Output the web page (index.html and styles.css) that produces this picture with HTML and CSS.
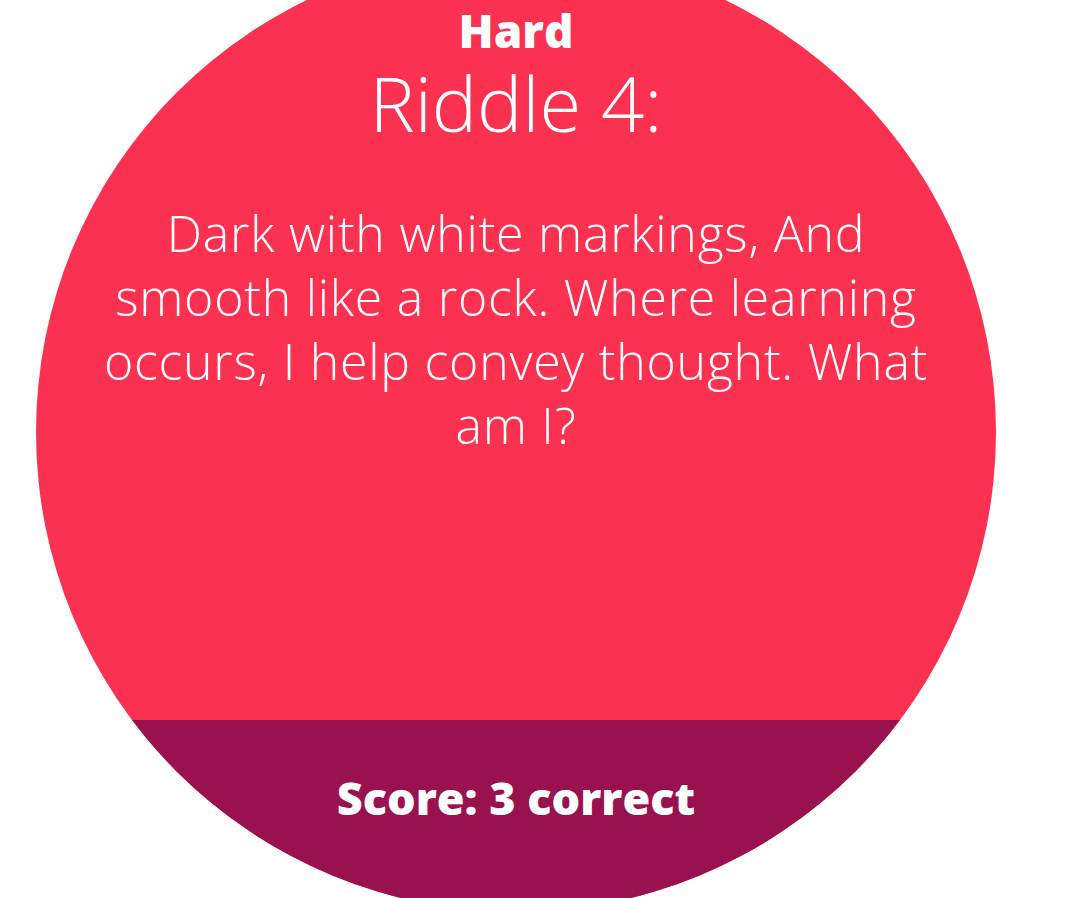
FILE: index.html
```html
<!DOCTYPE html>
<html>
<head>
<meta charset="utf-8">
<link rel="stylesheet" href="styles.css">
</head>
<body>
<div class="screen">
  <div class="main">
    <div class="level">Hard</div>
    <div class="title">Riddle 4:</div>
    <div class="riddle">Dark with white markings, And<br>smooth like a rock. Where learning<br>occurs, I help convey thought. What<br>am I?</div>
  </div>
  <div class="footer">
    <div class="score">Score: 3 correct</div>
  </div>
</div>
</body>
</html>
```
FILE: styles.css
```css
html, body {
  margin: 0;
  padding: 0;
  background: #ffffff;
  overflow: hidden;
}
body {
  width: 1086px;
  height: 898px;
}
.screen {
  width: 960px;
  height: 960px;
  margin-left: 36px;
  transform: translateY(-48px);
  border-radius: 50%;
  overflow: hidden;
  background: #fa3150;
  display: flex;
  flex-direction: column;
  color: #ffffff;
  font-family: "Open Sans", Lato, sans-serif;
  text-align: center;
}
.main {
  flex: 1;
  padding-top: 50px;
}
.level {
  font-weight: 800;
  font-size: 46px;
  line-height: 56px;
}
.title {
  font-weight: 300;
  font-size: 76px;
  line-height: 80px;
  margin-top: 5px;
}
.riddle {
  font-weight: 300;
  font-size: 50px;
  line-height: 64px;
  letter-spacing: 0.75px;
  margin-top: 58px;
}
.footer {
  height: 192px;
  background: #99114f;
  padding-top: 50px;
  box-sizing: border-box;
}
.score {
  font-weight: 800;
  font-size: 45px;
  line-height: 56px;
}
```
